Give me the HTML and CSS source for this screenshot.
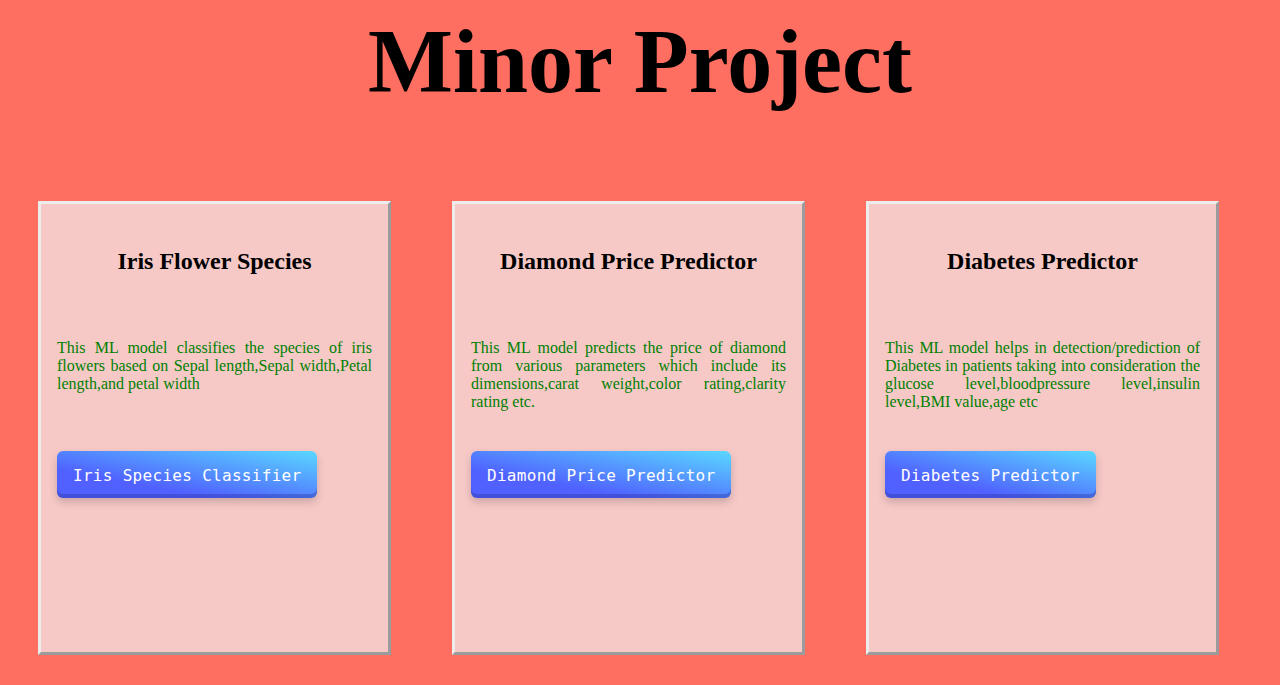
FILE: index.html
```html
<!DOCTYPE html>
<html>
<head>
<meta charset="utf-8">
<title>Minor Project</title>
<link rel="stylesheet" href="styles.css">
</head>
<body>
<h1 class="title">Minor Project</h1>
<div class="cards">
  <div class="card">
    <h2 class="card-title">Iris Flower Species</h2>
    <p class="card-text">This ML model classifies the species of iris flowers based on Sepal length,Sepal width,Petal length,and petal width</p>
    <button class="btn">Iris Species Classifier</button>
  </div>
  <div class="card">
    <h2 class="card-title">Diamond Price Predictor</h2>
    <p class="card-text">This ML model predicts the price of diamond from various parameters which include its dimensions,carat weight,color rating,clarity rating etc.</p>
    <button class="btn">Diamond Price Predictor</button>
  </div>
  <div class="card">
    <h2 class="card-title">Diabetes Predictor</h2>
    <p class="card-text">This ML model helps in detection/prediction of Diabetes in patients taking into consideration the glucose level,bloodpressure level,insulin level,BMI value,age etc</p>
    <button class="btn">Diabetes Predictor</button>
  </div>
</div>
</body>
</html>
```
FILE: styles.css
```css
html, body {
  margin: 0;
  padding: 0;
}
body {
  background: #ff6f61;
  font-family: "Liberation Serif", "Times New Roman", serif;
  height: 685px;
  overflow: hidden;
}
.title {
  margin: 0;
  padding-top: 12px;
  text-align: center;
  font-size: 90px;
  line-height: 100px;
  font-weight: bold;
  color: #000;
}
.cards {
  display: flex;
  gap: 61px;
  padding-left: 38px;
  margin-top: 89px;
}
.card {
  box-sizing: border-box;
  width: 353px;
  height: 454px;
  background: #f6c9c7;
  border: 3px solid;
  border-color: #ececec #9b9b9b #9b9b9b #ececec;
  padding: 0 16px;
}
.card-title {
  margin: 43px 0 0;
  text-align: center;
  font-size: 24px;
  line-height: 28px;
  font-weight: bold;
  color: #000;
}
.card-text {
  margin: 64px 0 0;
  height: 72px;
  text-align: justify;
  font-size: 16px;
  line-height: 18px;
  color: #008000;
}
.btn {
  display: block;
  margin-top: 40px;
  height: 47px;
  padding: 2px 16px 0;
  border: none;
  border-radius: 6px;
  background: linear-gradient(to top right, #5061ff 30%, #5ad8ff 100%);
  color: #fff;
  font-family: "DejaVu Sans Mono", "Liberation Mono", monospace;
  font-size: 16px;
  letter-spacing: 0.3px;
  box-shadow: inset 0 -4px 0 rgba(40, 50, 150, 0.35), 0 4px 8px rgba(0, 0, 0, 0.18);
  cursor: pointer;
}
```
